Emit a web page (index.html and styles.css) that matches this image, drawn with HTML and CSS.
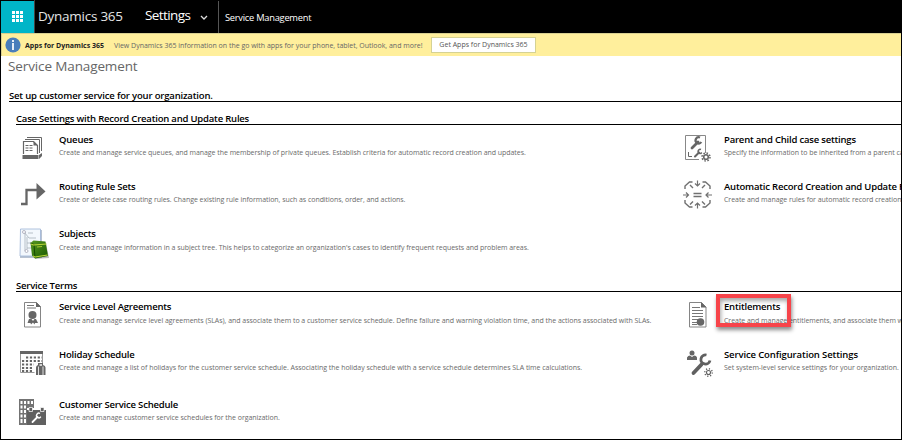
FILE: index.html
```
<!DOCTYPE html>
<html lang="en">
<head>
<meta charset="utf-8">
<title>Service Management</title>
<link rel="stylesheet" href="styles.css">
</head>
<body>
<div class="window">
  <header class="topbar">
    <div class="launcher">
      <svg width="12" height="12" viewBox="0 0 12 12" fill="#fff"><path d="M0 0h3v3H0zM4 0h3v3H4zM8 0h3v3H8zM0 4h3v3H0zM4 4h3v3H4zM8 4h3v3H8zM0 8h3v3H0zM4 8h3v3H4zM8 8h3v3H8z"/></svg>
    </div>
    <div class="brand">Dynamics 365</div>
    <div class="area">Settings</div>
    <svg class="chevron" width="8" height="6" viewBox="0 0 8 6" fill="none" stroke="#ddd" stroke-width="1.3"><path d="M1 1l3 3 3-3"/></svg>
    <div class="crumb">Service Management</div>
  </header>

  <div class="notice">
    <svg class="info" width="16" height="16" viewBox="0 0 16 16"><circle cx="8" cy="8" r="7.6" fill="#4a7ebb"/><path d="M7 3h2v2H7zM7 6h2v7H7z" fill="#e8eef7"/></svg>
    <strong class="notice-title">Apps for Dynamics 365</strong>
    <span class="notice-text">View Dynamics 365 information on the go with apps for your phone, tablet, Outlook, and more!</span>
    <button class="get-apps">Get Apps for Dynamics 365</button>
  </div>

  <main>
    <h1>Service Management</h1>
    <p class="intro">Set up customer service for your organization.</p>

    <section class="group">
      <h2>Case Settings with Record Creation and Update Rules</h2>
      <div class="items items-case">
        <article class="item">
          <svg width="36" height="36" viewBox="16 130 36 36" fill="none" stroke="#666">
            <path d="M27 137.500h14.500V151M25 139.500h14.500V153" stroke-width="1"/>
            <path d="M23.500 154v-12.500h10l4 4V154" stroke-width="1.200"/><path d="M33.500 141v4.500h4.500z" fill="#666" stroke="none"/>
            <path d="M25.500 145.500h3m1 0h3M25.500 148h3m1 0h3M25.500 150.500h3m1 0h3" stroke-width="1.200"/>
            <path d="M22.500 155h16v4h-16zM39 155l3-2v3l-3 3z" fill="#666" stroke="none"/>
          </svg>
          <div class="text"><h3>Queues</h3><p>Create and manage service queues, and manage the membership of private queues. Establish criteria for automatic record creation and updates.</p></div>
        </article>
        <article class="item">
          <svg width="36" height="36" viewBox="681 130 36 36" fill="none" stroke="#666">
            <path d="M705.500 153v-17.500h-20V159.500H699" stroke="#888"/>
            <path d="M692 148l6-6" stroke-width="2.800" stroke-linecap="round"/><path d="M700 137.500a3.100 3.100 0 1 0 1.300 4.500" stroke-width="2.200"/>
            <path d="M695 156.500l4-4" stroke-width="2" stroke-linecap="round"/><path d="M701 149.500a2 2 0 1 0 .8 3" stroke-width="1.500"/><path d="M688.500 152v4.500h3.500"/>
            <circle cx="706" cy="157" r="2.300" stroke-width="1.600"/><circle cx="706" cy="157" r="4" stroke-width="1.500" stroke-dasharray="1.570 1.570"/>
          </svg>
          <div class="text"><h3>Parent and Child case settings</h3><p>Specify the information to be inherited from a parent case.</p></div>
        </article>
        <article class="item">
          <svg width="36" height="36" viewBox="16 177 36 36">
            <path d="M21 204h5.500v-14H37" fill="none" stroke="#666" stroke-width="2.300"/><path d="M36.500 183l9 8.500-9 8z" fill="#666"/>
          </svg>
          <div class="text"><h3>Routing Rule Sets</h3><p>Create or delete case routing rules. Change existing rule information, such as conditions, order, and actions.</p></div>
        </article>
        <article class="item">
          <svg width="36" height="36" viewBox="681 177 36 36" fill="none" stroke="#707070" stroke-width="1.200">
            <path d="M692.500 182h-3l-4.500 4v3M690 185l3 3M702.500 182h3l4.500 4v3M705 185l-3 3M692.500 207h-3l-4.500-4v-3M690 204.500l3-3M702.500 207h3l4.500-4v-3M705 204.500l-3-3" stroke-width="1.400"/>
            <path d="M697.500 180.500v5.500m-2.500-2.500l2.500 2.500 2.500-2.500M697.500 208.500v-5.500m-2.500 2.500l2.500-2.500 2.500 2.500M683 195h5.500m-2.500-2.500l2.500 2.500-2.500 2.500M712 195h-6m2.500-2.500L706 195l2.500 2.500"/>
            <path d="M693.500 193.500h8M693.500 196.500h8" stroke-width="1.500"/>
          </svg>
          <div class="text"><h3>Automatic Record Creation and Update Rules</h3><p>Create and manage rules for automatic record creation.</p></div>
        </article>
        <article class="item roomy">
          <svg width="36" height="36" viewBox="16 223 36 36">
            <defs><linearGradient id="book" x2="1" y2="1"><stop stop-color="#579821"/><stop offset="1" stop-color="#195900"/></linearGradient></defs>
            <path d="M21 229h21v28H20z" fill="#b9c3d2"/><path d="M20.500 228h20v27H20z" fill="#f3f8fd" stroke="#9db4d6" stroke-width=".8"/>
            <path d="M24 231l5 6h7m-11-6v19m2-14v12m0-6h4m-4 5h5m-4-15h5" stroke="#a7b1ba" stroke-width=".8" fill="none"/><circle cx="24" cy="231" r="1.500" fill="#fff" stroke="#99a" stroke-width=".7"/><circle cx="26.500" cy="250" r="1.500" fill="#fff" stroke="#99a" stroke-width=".7"/>
            <path d="M33 243l13-1 3 15-14 1z" fill="#777" opacity=".5"/>
            <path d="M30.500 242l3-2.500 12 1 2.500 14.500-13 2.500-3-3z" fill="url(#book)"/><path d="M30.500 242l3.500 1.500 1 13" fill="none" stroke="#154b02"/>
            <path d="M31 243l2.500 1 13-1M33 255l2 1 12.500-2" fill="none" stroke="#bdd63a" stroke-width="1.100"/><path d="M37 246l5-.5" stroke="#a8c82f"/>
          </svg>
          <div class="text"><h3>Subjects</h3><p>Create and manage information in a subject tree. This helps to categorize an organization's cases to identify frequent requests and problem areas.</p></div>
        </article>
      </div>
    </section>

    <section class="group">
      <h2>Service Terms</h2>
      <div class="items items-terms">
        <article class="item roomy">
          <svg width="36" height="36" viewBox="16 297 36 36">
            <path d="M24.500 302.500h12l4 4v20.500h-16z" fill="none" stroke="#858585"/><path d="M36 302l5 5h-5zM29 319h2.500l1.500 2 1.500-2H36l2 4h-3l-.5 1.500-1.500-2-2 2-.5-1.500h-3z" fill="#666"/>
            <circle cx="32.500" cy="315" r="4" fill="#666"/><path d="M27 305.500h7M27 308h9" stroke="#777"/>
          </svg>
          <div class="text"><h3>Service Level Agreements</h3><p class="wide">Create and manage service level agreements (SLAs), and associate them to a customer service schedule. Define failure and warning violation time, and the actions associated with SLAs.</p></div>
        </article>
        <article class="item roomy">
          <svg width="36" height="36" viewBox="681 297 36 36">
            <path d="M689.500 302.500h12l4.500 4.500v20h-16.500z" fill="none" stroke="#858585"/><path d="M701 302l5.500 5.500H701z" fill="#666"/>
            <path d="M692 307.500h8M692 310.500h11M692 313.500h11M692 316.500h11M692 319.500h6M692 322.500h5M692 324.500h5" stroke="#777"/><circle cx="700.500" cy="322" r="3.800" fill="#666"/>
          </svg>
          <div class="text"><h3 class="marked">Entitlements</h3><p>Create and manage entitlements, and associate them with</p></div>
        </article>
        <article class="item">
          <svg width="36" height="36" viewBox="16 345 36 36">
            <path d="M20.500 351.500h22V363M20.500 351v21.500h14" fill="none" stroke="#999"/><path d="M20 351h23v3H20z" fill="#666"/>
            <path d="M26 357.500h16M22 361h20M22 364.500h12M22 368h11M22 371h11" stroke="#666" stroke-width="2" stroke-dasharray="2.200 1.700"/>
            <path d="M36 367.500q0-2 2-2.500v-2h5v2q2.500.5 2.500 2.500v7.500H36z" fill="#666"/><path d="M38.500 375v-8.500M43 375v-8.500" stroke="#fff" stroke-width=".8"/><path d="M39.500 365h2.500" stroke="#fff" stroke-width="1.400"/>
          </svg>
          <div class="text"><h3>Holiday Schedule</h3><p class="wide">Create and manage a list of holidays for the customer service schedule. Associating the holiday schedule with a service schedule determines SLA time calculations.</p></div>
        </article>
        <article class="item">
          <svg width="36" height="36" viewBox="681 345 36 36" fill="none" stroke="#606060">
            <circle cx="692" cy="353" r="2.500" fill="#666" stroke="none"/><path d="M687 360v-2.500q1-2 3-2l2 1.500 2-1.500q2.500 0 3 2V360z" fill="#666" stroke="none"/>
            <path d="M693.500 373l8-8.500" stroke-width="3.800" stroke-linecap="round"/><path d="M706.500 355a4.600 4.600 0 1 0 3.500 5.500" stroke-width="2.800"/>
            <circle cx="708.500" cy="372.500" r="2" stroke-width="1.100"/><circle cx="708.500" cy="372.500" r="3.700" stroke-width="1.500" stroke-dasharray="1.100 1.800"/>
          </svg>
          <div class="text"><h3 class="config">Service Configuration Settings</h3><p class="wide">Set system-level service settings for your organization.</p></div>
        </article>
        <article class="item">
          <svg width="36" height="36" viewBox="16 395 36 36">
            <path d="M19 399h15v9h-7v17h-8z" fill="#737373"/><path d="M20.500 401h2v3h-2zM24 401h2v3h-2zM27.500 401h2v3h-2zM31 401h2v3h-2zM20.500 405.500h2v3h-2zM24 405.500h2v3h-2zM20.500 410h2v3h-2zM24 410h2v3h-2zM20.500 414.500h2v3h-2zM24 414.500h2v3h-2zM20.500 419h2v4h-2zM24 419h2v4h-2z" fill="#fff"/>
            <path d="M27 410h19v15H27z" fill="#606060"/><path d="M29 407.500h3.500v4H29zM40.500 407.500H44v4h-3.500z" fill="#606060" stroke="#fff" stroke-width=".7"/>
            <path d="M32.500 422l5-5" stroke="#fff" stroke-width="1.800" stroke-linecap="round"/><path d="M40 413.500a2.300 2.300 0 1 0 .8 3.200" stroke="#fff" stroke-width="1.400" fill="none"/>
          </svg>
          <div class="text"><h3>Customer Service Schedule</h3><p>Create and manage customer service schedules for the organization.</p></div>
        </article>
      </div>
    </section>
  </main>
</div>
</body>
</html>
```
FILE: styles.css
```
* { box-sizing: border-box; margin: 0; padding: 0; }
body { font-family: "Open Sans", sans-serif; background: #fff; overflow: hidden; }
.window { width: 902px; height: 440px; border: 1px solid #000; border-top: 0; overflow: hidden; }

.topbar { display: flex; height: 33px; background: #000; color: #fff; }
.launcher { width: 33px; margin-top: 1px; background: #00b5c8; display: flex; padding: 10px 0 0 11px; }
.brand { width: 106px; padding-left: 3px; border-left: 1px solid #444; font-size: 13.5px; letter-spacing: -.25px; line-height: 32px; color: #e4e4e4; white-space: nowrap; }
.area { width: 60px; padding-left: 5px; font-size: 13.5px; letter-spacing: -.6px; line-height: 31px; }
.chevron { margin: 15px 10px 0 0; }
.crumb { margin-top: 1px; padding-left: 6px; border-left: 1px solid #555; font-size: 9.3px; letter-spacing: -.25px; line-height: 33px; }

.notice { display: flex; align-items: center; height: 23px; padding-left: 3px; background: #ffef9c; border-top: 1px solid #d8d091; border-left: 1px solid #d8d091; font-size: 7px; white-space: nowrap; }
.info { margin-right: 4px; }
.notice-title { width: 89px; color: #222; }
.notice-text { width: 317px; color: #666; letter-spacing: -.01px; }
.get-apps { width: 105px; height: 16px; padding-bottom: 2px; background: #fff; border: 1px solid #d5d294; color: #555; font: 7px "Open Sans", sans-serif; white-space: nowrap; }

h1 { padding-left: 7px; height: 33px; font-size: 13.5px; font-weight: 400; letter-spacing: -.12px; line-height: 21px; color: #666; }
.intro { margin-left: 8px; height: 13px; border-bottom: 1px solid #000; font-size: 9.5px; font-weight: 600; letter-spacing: -.17px; line-height: 14px; }
.group { margin-left: 15px; }
h2 { height: 23px; padding-top: 10px; border-bottom: 1px solid #000; font-size: 9.5px; font-weight: 600; letter-spacing: -.2px; line-height: 14px; color: #000; }
.items { display: grid; grid-template-columns: 665px 221px; padding-top: 5px; }
.items-case { grid-template-rows: 47px 47px 45px; }
.items-terms { grid-template-rows: 48px 50px 44px; }
.item { display: flex; gap: 7px; min-width: 0; }
.item > svg { flex: none; }
.text { min-width: 0; padding-top: 3px; white-space: nowrap; }
h3 { position: relative; font-size: 9.5px; font-weight: 600; letter-spacing: -.2px; line-height: 14px; color: #000; }
.config { letter-spacing: -.12px; }
.text p { font-size: 7px; letter-spacing: -.045px; line-height: 11px; color: #6a6a6a; }
.text p.wide { letter-spacing: -.03px; }
.roomy p { margin-top: 1px; }
.marked::after { content: ""; box-sizing: border-box; position: absolute; left: -8px; top: -6px; width: 75px; height: 33px; border: 4px solid #f7444a; box-shadow: 1px 3px 4px rgba(0, 0, 0, .45), inset 1px 3px 4px rgba(0, 0, 0, .35); }
```
